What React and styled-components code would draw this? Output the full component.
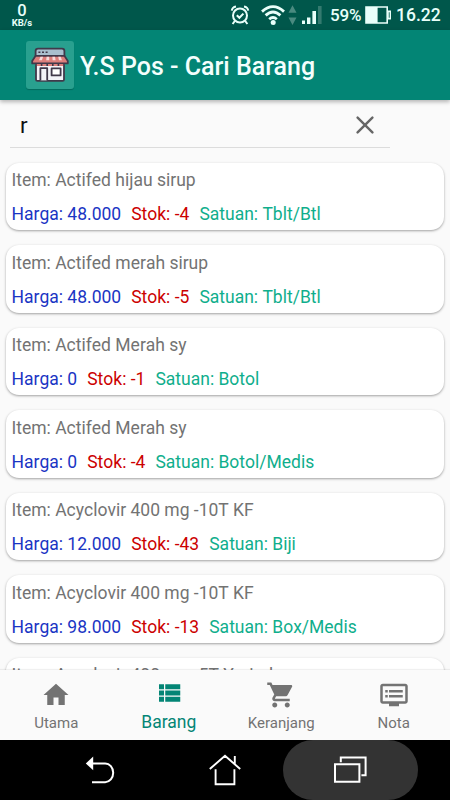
import React, { useState } from "react";
import styled, { createGlobalStyle } from "styled-components";

const color_status = "#00574b";
const color_primary = "#038575";
const color_surface = "#fafafa";
const color_text = "#737373";
const color_price = "#1a35c4";
const color_stock = "#cc0000";
const color_unit = "#0fae8c";

const items = [
  { name: "Actifed hijau sirup", price: "48.000", stock: "-4", unit: "Tblt/Btl" },
  { name: "Actifed merah sirup", price: "48.000", stock: "-5", unit: "Tblt/Btl" },
  { name: "Actifed Merah sy", price: "0", stock: "-1", unit: "Botol" },
  { name: "Actifed Merah sy", price: "0", stock: "-4", unit: "Botol/Medis" },
  { name: "Acyclovir 400 mg -10T KF", price: "12.000", stock: "-43", unit: "Biji" },
  { name: "Acyclovir 400 mg -10T KF", price: "98.000", stock: "-13", unit: "Box/Medis" },
  { name: "Acyclovir 400 mg -5T Yarindo" }
];

const tabs = [
  { label: "Utama", path: "M10 20v-6h4v6h5v-8h3L12 3 2 12h3v8z" },
  {
    label: "Barang",
    path:
      "M4 14h4v-4H4v4zm0 5h4v-4H4v4zM4 9h4V5H4v4zm5 5h12v-4H9v4zm0 5h12v-4H9v4zM9 5v4h12V5H9z"
  },
  {
    label: "Keranjang",
    path:
      "M7 18c-1.1 0-1.99.9-1.99 2S5.9 22 7 22s2-.9 2-2-.9-2-2-2zM1 2v2h2l3.6 7.59-1.35 2.45c-.16.28-.25.61-.25.96 0 1.1.9 2 2 2h12v-2H7.42c-.14 0-.25-.11-.25-.25l.03-.12.9-1.63h7.45c.75 0 1.41-.41 1.75-1.03l3.58-6.49c.08-.14.12-.31.12-.48 0-.55-.45-1-1-1H5.21l-.94-2H1zm16 16c-1.1 0-1.99.9-1.99 2s.89 2 1.99 2 2-.9 2-2-.9-2-2-2z"
  },
  {
    label: "Nota",
    path:
      "M21 3H3c-1.1 0-2 .9-2 2v12c0 1.1.9 2 2 2h5v2h8v-2h5c1.1 0 1.99-.9 1.99-2L23 5c0-1.1-.9-2-2-2zm0 14H3V5h18v12zm-2-9H8v2h11V8zm0 4H8v2h11v-2zM7 8H5v2h2V8zm0 4H5v2h2v-2z"
  }
];

const App = () => {
  const [query, setQuery] = useState("r");
  const [active, setActive] = useState("Barang");

  return (
    <>
      <GlobalStyle />
      <Screen>
        <StatusBarComponent />
        <AppBar>
          <Logo>
            <StoreSvg />
          </Logo>
          <Title>Y.S Pos - Cari Barang</Title>
        </AppBar>
        <SearchBox>
          <SearchInput
            aria-label="Cari"
            value={query}
            onChange={e => setQuery(e.target.value)}
          />
          <ClearBtn aria-label="Hapus" onClick={() => setQuery("")}>
            <svg width="18" height="18" viewBox="0 0 18 18">
              <path
                d="M1.6 1.6 16.4 16.4M16.4 1.6 1.6 16.4"
                stroke="#666"
                strokeWidth="2.4"
                strokeLinecap="round"
              />
            </svg>
          </ClearBtn>
        </SearchBox>
        <List>
          {items.map((item, i) => (
            <ItemComponent key={i} {...item} />
          ))}
        </List>
        <Tabs>
          {tabs.map(({ label, path }) => (
            <Tab
              key={label}
              $active={label === active}
              onClick={() => setActive(label)}
            >
              <svg width="30" height="30" viewBox="0 0 24 24">
                <path d={path} />
              </svg>
              <span>{label}</span>
            </Tab>
          ))}
        </Tabs>
        <SystemNavComponent />
      </Screen>
    </>
  );
};

export default App;

const ItemComponent = ({ name, price, stock, unit }) => (
  <Card>
    <Line>Item: {name}</Line>
    {price && (
      <Line>
        <Value $color={color_price}>Harga: {price}</Value>
        <Value $color={color_stock}>Stok: {stock}</Value>
        <Value $color={color_unit}>Satuan: {unit}</Value>
      </Line>
    )}
  </Card>
);

const StatusBarComponent = () => (
  <StatusBar>
    <Speed>
      <b>0</b>
      <small>KB/s</small>
    </Speed>
    <StatusIcons>
      <svg width="100" height="30" viewBox="230 0 100 30">
        <g fill="none" stroke="#e9fffa" strokeWidth="2">
          <circle cx="240" cy="15.5" r="7" />
          <path d="M236.8 15.2 239.4 17.8 243.4 13.6M234.8 21l-2.2 3M245.2 21l2.2 3" />
          <path d="M231.8 10.6Q232.2 7 236 6.4M248.2 10.6Q247.8 7 244 6.4" />
        </g>
        <g fill="none" stroke="#e9fffa" strokeWidth="2.8">
          <path d="M262 11.6Q273 1.6 284 11.6" />
          <path d="M265.6 15.4Q273 8.6 280.4 15.4" />
          <path d="M269.2 19.2Q273 15.8 276.8 19.2" />
        </g>
        <circle cx="273.2" cy="22.6" r="2.5" fill="#e9fffa" />
        <path d="M292.5 5.2l4 7.6h-8zM292.5 25l4-7.6h-8z" fill="#4a8a80" />
        <path
          d="M302 20.5h3V24h-3zM307 17.4h3.4V24H307zM312.4 11h3.6v13h-3.6z"
          fill="#e9fffa"
        />
        <path d="M318 6h3.6v18H318z" fill="#347a6f" />
      </svg>
      <Percent>59%</Percent>
      <svg width="26" height="18" viewBox="0 0 26 18">
        <path
          d="M1 1h21.2v16H1zM23 5.4h2.4v7.2H23z"
          fill="none"
          stroke="#e9fffa"
          strokeWidth="1.6"
        />
        <path d="M1 1h11.6v16H1z" fill="#e9fffa" />
      </svg>
      <Clock>16.22</Clock>
    </StatusIcons>
  </StatusBar>
);

const StoreSvg = () => (
  <svg width="38" height="36" viewBox="0 0 38 36">
    <g stroke="#40394a" strokeWidth="1.8" strokeLinejoin="round">
      <path d="M5 18h28v14.4q0 1.4-1.4 1.4H6.4Q5 33.8 5 32.4z" fill="#f3f3f8" />
      <path d="M4.6 9V4q0-2.4 2.4-2.4h24q2.4 0 2.4 2.4v5z" fill="#a9bfce" />
      <path d="M4.6 8.8h28.8l3.4 5.2v2.4H1.2V14z" fill="#dd7f7c" />
      <path d="M9.4 33.4V21.2h6.8v12.2" fill="#f3f3f8" />
      <path d="M20.6 21.4h9v7h-9z" fill="#fff" />
    </g>
    <path
      d="M9.500 9.800h2.600l-1.200 3.400H8zM15.600 9.800h2.600v3.400h-3zM21.400 9.800h2.600l.6 3.400h-3zM27.200 9.800h2.400l1.400 3.400h-3z"
      fill="#f7dada"
    />
    <path d="M5.800 18h26.400" stroke="#dd7f7c" strokeWidth="2" strokeDasharray="4 1.600" />
    <path d="M7.400 5.200h2M11 5.200h2M14.600 5.200h2" stroke="#40394a" strokeWidth="1.600" />
  </svg>
);

const SystemNavComponent = () => (
  <SystemNav>
    <SystemBtn aria-label="Back">
      <svg width="32" height="32" viewBox="0 0 32 32">
        <path
          d="M6 9.400h15.200a8 9.400 0 0 1 0 18.800H8"
          fill="none"
          stroke="#fff"
          strokeWidth="2"
        />
        <path d="M1.800 9.400 9.200 2.600v13.600z" fill="#fff" />
      </svg>
    </SystemBtn>
    <SystemBtn aria-label="Home">
      <svg width="32" height="32" viewBox="0 0 32 32">
        <path
          d="M.8 15 16 1.800 31.200 15M6.600 15.200v15h18.800v-15M25.800 2v8"
          fill="none"
          stroke="#fff"
          strokeWidth="1.900"
        />
      </svg>
    </SystemBtn>
    <SystemBtn aria-label="Recents" $pressed>
      <svg width="34" height="30" viewBox="0 0 34 30">
        <path
          d="M2 9.200h24.400v17.600H2zM7.800 7.200V2.400h24.800v17.800h-4.200"
          fill="none"
          stroke="#fff"
          strokeWidth="2"
        />
      </svg>
    </SystemBtn>
  </SystemNav>
);

const GlobalStyle = createGlobalStyle`
  body {
    margin: 0;
    font-family: Roboto, sans-serif;
    background: ${color_surface};
  }

  button {
    font-family: inherit;
    padding: 0;
    border: none;
    background: none;
    cursor: pointer;
  }

  svg {
    display: block;
    flex: none;
  }
`;

const Screen = styled.div`
  display: flex;
  flex-direction: column;
  width: 450px;
  height: 800px;
  overflow: hidden;
  background-color: ${color_surface};
`;

const StatusBar = styled.div`
  display: flex;
  flex: none;
  justify-content: space-between;
  align-items: center;
  box-sizing: border-box;
  height: 30px;
  padding: 0 10px 0 11px;
  color: #e9fffa;
  background-color: ${color_status};
`;

const Speed = styled.div`
  display: flex;
  flex-direction: column;
  align-items: center;
  width: 22px;

  b {
    font-size: 16.5px;
    font-weight: 500;
    line-height: 14px;
  }

  small {
    font-size: 9.5px;
    font-weight: 700;
    line-height: 9px;
  }
`;

const StatusIcons = styled.div`
  display: flex;
  align-items: center;
`;

const Percent = styled.span`
  width: 35px;
  font-size: 17px;
  font-weight: 500;
  letter-spacing: -0.2px;
`;

const Clock = styled.span`
  width: 44px;
  margin-left: 5px;
  font-size: 17.5px;
  font-weight: 500;
  text-align: right;
`;

const AppBar = styled.header`
  display: flex;
  flex: none;
  align-items: center;
  height: 70px;
  padding-left: 26px;
  background-color: ${color_primary};
  box-shadow: 0 2px 4px rgba(0, 0, 0, 0.28);
  z-index: 1;
`;

const Logo = styled.div`
  display: flex;
  justify-content: center;
  align-items: center;
  width: 48px;
  height: 48px;
  border-radius: 3px;
  background-color: #29a08f;
  box-shadow: 0 1px 1px rgba(0, 0, 0, 0.2);
`;

const Title = styled.h1`
  margin: 2px 0 0 6px;
  font-size: 25px;
  font-weight: 500;
  color: #f4fffd;
`;

const SearchBox = styled.div`
  display: flex;
  flex: none;
  align-items: center;
  box-sizing: border-box;
  width: 380px;
  height: 48px;
  margin-left: 10px;
  padding: 2px 16px 0 10px;
  border-bottom: 1px solid #dcdcdc;
`;

const SearchInput = styled.input`
  flex: 1;
  min-width: 0;
  padding: 0;
  border: none;
  outline: none;
  font-family: inherit;
  font-size: 22.5px;
  color: #111;
  background: transparent;
`;

const ClearBtn = styled.button`
  display: flex;
`;

const List = styled.main`
  display: flex;
  flex: 1;
  flex-direction: column;
  gap: 15px;
  min-height: 0;
  padding: 14.5px 6px 0;
  overflow: hidden;
`;

const Card = styled.div`
  display: flex;
  flex: none;
  flex-direction: column;
  gap: 13px;
  box-sizing: border-box;
  height: 67.5px;
  padding: 7.5px 5.5px 0;
  border-radius: 13px;
  background-color: #fff;
  box-shadow: 0 1px 2.5px rgba(0, 0, 0, 0.36);
`;

const Line = styled.div`
  display: flex;
  gap: 10px;
  font-size: 17.5px;
  font-kerning: none;
  line-height: 21px;
  white-space: nowrap;
  color: ${color_text};
`;

const Value = styled.span`
  color: ${props => props.$color};
`;

const Tabs = styled.nav`
  display: flex;
  flex: none;
  height: 70px;
  background-color: ${color_surface};
  box-shadow: 0 -1px 1px rgba(0, 0, 0, 0.06);
  z-index: 1;
`;

const Tab = styled.button`
  display: flex;
  flex: 1;
  flex-direction: column;
  align-items: center;
  box-sizing: border-box;
  padding-top: ${props => (props.$active ? "7.5px" : "10px")};
  font-size: ${props => (props.$active ? "17.5px" : "15px")};
  color: ${props => (props.$active ? color_primary : color_text)};
  fill: currentColor;

  span {
    margin-top: ${props => (props.$active ? "4px" : "2.5px")};
    line-height: 20px;
  }
`;

const SystemNav = styled.footer`
  display: flex;
  flex: none;
  align-items: center;
  height: 60px;
  padding-left: 37.5px;
  background-color: #000;
`;

const SystemBtn = styled.button`
  display: flex;
  justify-content: center;
  align-items: center;
  flex: none;
  width: ${props => (props.$pressed ? "135px" : "125px")};
  height: 60px;
  margin-left: ${props => (props.$pressed ? "-5px" : "0")};
  border-radius: 30px;
  background-color: ${props => (props.$pressed ? "#333" : "transparent")};
`;
